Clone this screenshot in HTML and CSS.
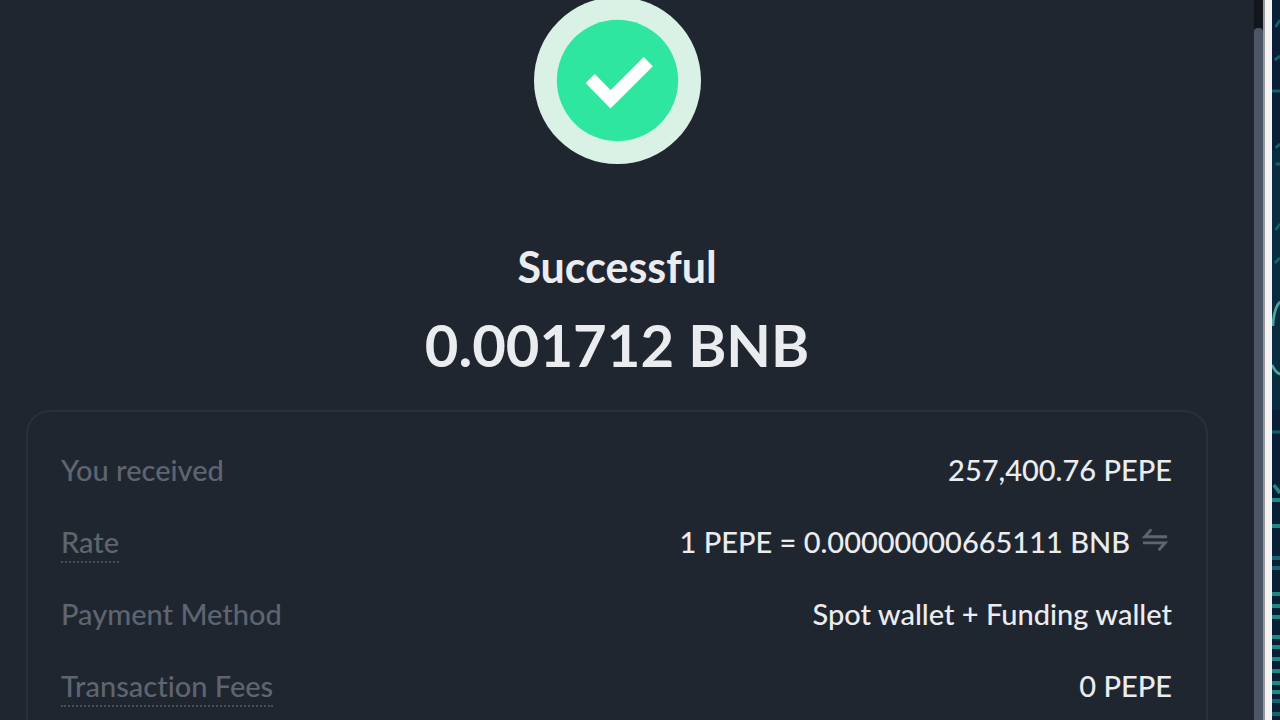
FILE: index.html
```
<!DOCTYPE html>
<html lang="en">
<head>
<meta charset="utf-8">
<meta name="viewport" content="width=device-width, initial-scale=1">
<title>Conversion successful</title>
<link rel="stylesheet" href="styles.css">
</head>
<body>
<div class="screen">
  <main class="dialog">
    <svg class="status-icon" viewBox="0 0 168 168" aria-hidden="true">
      <circle cx="84" cy="84" r="84" fill="#daf2e5"/>
      <circle cx="84" cy="84" r="61" fill="#2ee6a0"/>
      <path d="M56.500 82L77 103L115 65" fill="none" stroke="#fff" stroke-width="13"/>
    </svg>
    <h1 class="status">Successful</h1>
    <p class="amount">0.001712 BNB</p>
    <dl class="details">
      <div class="row"><dt>You received</dt><dd>257,400.76 PEPE</dd></div>
      <div class="row"><dt><span class="hint">Rate</span></dt>
        <dd>1 PEPE = 0.00000000665111 BNB
          <button class="swap" type="button" aria-label="Invert rate">
            <svg class="swap-icon" viewBox="0 0 28 26" aria-hidden="true"><path d="M27 9.500H3L10 1.500M1 16H25L18 24" fill="none" stroke="#5e6470" stroke-width="3"/></svg>
          </button></dd></div>
      <div class="row"><dt>Payment Method</dt><dd>Spot wallet + Funding wallet</dd></div>
      <div class="row"><dt><span class="hint">Transaction Fees</span></dt><dd>0 PEPE</dd></div>
    </dl>
  </main>
  <div class="scrollbar"><div class="thumb"></div></div>
  <div class="frame"></div>
  <svg class="backdrop" viewBox="0 0 9 720" preserveAspectRatio="none" aria-hidden="true">
    <rect width="9" height="720" fill="#081f35"/>
    <rect y="150" width="9" height="260" fill="#092c40"/>
    <g fill="none" stroke="#17606b" stroke-width="3">
      <path d="M4 27L9 20M3 60L9 56M0 91H9M4 148L9 144M4 164H9M4 230L9 224M3 263L9 258M0 432H9"/>
    </g>
    <path d="M9 302Q2 308 1 326M0 365Q4 373 9 374" fill="none" stroke="#4aa79b" stroke-width="3"/>
    <g fill="none" stroke="#218782" stroke-width="4">
      <path d="M2 485L9 493M0 500H9M0 526H9M0 594H9M0 606H9M0 617H9M0 637H9M0 647H9M0 659H9M0 671H9M0 683H9M0 692H9"/>
    </g>
    <path d="M0 558H9M0 568H9M0 701H9M0 714H9" stroke="#176174" stroke-width="4"/>
  </svg>
</div>
</body>
</html>
```
FILE: styles.css
```
* { box-sizing: border-box; }
body { margin: 0; background: #202630; font-family: Lato, "Open Sans", sans-serif; font-variant-ligatures: none; color: #eaecef; }
.screen { display: flex; height: 100vh; overflow: hidden; }
.dialog { flex: 1; min-width: 0; overflow: hidden; padding: 0 46px 0 26px; display: flex; flex-direction: column; align-items: center; }
.status-icon { width: 167px; height: 167px; flex: none; margin-top: -3px; }
.status { margin: 79px 0 0; font-size: 43px; line-height: 48px; font-weight: 700; }
.amount { margin: 22px 0 0; font-size: 58px; line-height: 64px; font-weight: 700; }
.details { align-self: stretch; flex: none; margin: 33px 0 0; padding: 22px 34px 24px 33px; border: 2px solid #2a303a; border-radius: 24px; font-size: 29px; line-height: 36px; font-weight: 500; }
.row { display: flex; justify-content: space-between; align-items: center; height: 72px; }
dt { color: #5e6470; }
dd { margin: 0; display: flex; align-items: center; gap: 12px; }
.hint { display: inline-block; padding: 3px 0 1px; border-bottom: 2px dotted #474d59; }
.swap { display: flex; padding: 0 4px 4px 0; border: 0; background: none; cursor: pointer; }
.swap-icon { width: 26px; height: 26px; }
.scrollbar { flex: none; width: 9px; padding-top: 28px; background: #12151b; }
.thumb { height: 100%; border-radius: 4px 4px 0 0; background: #4d5667; }
.frame { flex: none; width: 9px; background: #f3f2f5; border-left: 2px solid #9b989b; }
.backdrop { flex: none; width: 8px; height: 100%; }
```
